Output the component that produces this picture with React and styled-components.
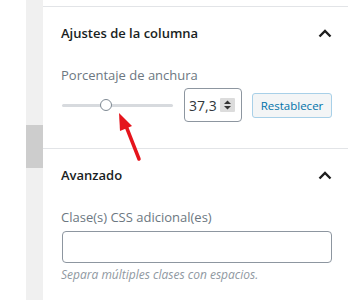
import styled, { createGlobalStyle } from "styled-components";

const GlobalStyle = createGlobalStyle`
    body {
        margin: 0;
        background: #fff;
        font-family: "Open Sans", "Noto Sans", sans-serif;
    }
`

function Chevron() {
    return (
        <svg width="14" height="9" viewBox="0 0 14 9">
            <polyline points="1.5,7.5 7,2 12.5,7.5" fill="none" stroke="#1e1e1e" strokeWidth="2.4" />
        </svg>
    )
}

function Spinner() {
    return (
        <Spin>
            <svg width="15" height="14" viewBox="0 0 15 14">
                <polygon points="7.5,2.5 11,6 4,6" fill="#333" />
                <polygon points="4,8 11,8 7.5,11.5" fill="#333" />
            </svg>
        </Spin>
    )
}

export default function App() {
    return (
        <Page>
            <GlobalStyle />
            <Gutter />
            <Track>
                <Thumb />
            </Track>
            <Panel>
                <Section>
                    <Header>
                        <Title>Ajustes de la columna</Title>
                        <Chevron />
                    </Header>
                    <Label>Porcentaje de anchura</Label>
                    <Controls>
                        <Slider>
                            <Knob $left={44} />
                        </Slider>
                        <NumberBox>
                            <Value>37,3</Value>
                            <Spinner />
                        </NumberBox>
                        <Reset>Restablecer</Reset>
                    </Controls>
                </Section>
                <Section>
                    <Header>
                        <Title>Avanzado</Title>
                        <Chevron />
                    </Header>
                    <Label>Clase(s) CSS adicional(es)</Label>
                    <TextInput />
                    <Help>Separa múltiples clases con espacios.</Help>
                </Section>
            </Panel>
            <Arrow width="32" height="50" viewBox="0 0 32 50">
                <line x1="24" y1="47" x2="11" y2="14" stroke="#e5141c" strokeWidth="3.5" strokeLinecap="round" />
                <polygon points="4,1 17,14 5,19" fill="#e5141c" />
            </Arrow>
        </Page>
    )
}

const Page = styled.div`
    position: relative;
    display: flex;
    width: 361px;
    height: 300px;
    overflow: hidden;
`

const Gutter = styled.div`
    width: 26px;
    flex-shrink: 0;
`

const Track = styled.div`
    width: 17px;
    flex-shrink: 0;
    background: #f0f0f0;
    padding-top: 125px;
    box-sizing: border-box;
`

const Thumb = styled.div`
    height: 43px;
    background: #cdcdcd;
`

const Panel = styled.div`
    width: 305px;
    padding-top: 6px;
`

const Section = styled.div`
    border-top: 1px solid #e2e4e7;
    padding: 16px 16px 26px 18px;
    display: flex;
    flex-direction: column;
`

const Header = styled.div`
    display: flex;
    justify-content: space-between;
    align-items: center;
    height: 20px;
`

const Title = styled.h2`
    margin: 0;
    font-size: 13px;
    font-weight: 600;
    color: #191e23;
`

const Label = styled.div`
    margin-top: 23px;
    font-size: 13px;
    line-height: 18px;
    color: #6c7781;
`

const Controls = styled.div`
    display: flex;
    align-items: center;
    margin-top: 4px;
`

const Slider = styled.div`
    position: relative;
    width: 111px;
    height: 3px;
    background: #d7dade;
    border-radius: 2px;
    margin: 0 11px 0 1px;
`

const Knob = styled.div`
    position: absolute;
    top: -5px;
    left: ${(p) => p.$left - 6}px;
    width: 10px;
    height: 10px;
    border-radius: 50%;
    border: 1.5px solid #7e8993;
    background: #fff;
`

const NumberBox = styled.div`
    box-sizing: border-box;
    width: 58px;
    height: 34px;
    border: 1px solid #8d96a0;
    border-radius: 4px;
    display: flex;
    align-items: center;
    padding-left: 4px;
    gap: 3px;
`

const Value = styled.span`
    font-size: 14px;
    color: #32373c;
`

const Spin = styled.span`
    display: flex;
    background: #dcdcdc;
    border-radius: 1px;
`

const Reset = styled.button`
    margin-left: 10px;
    box-sizing: border-box;
    width: 80px;
    height: 25px;
    padding: 0;
    border: 1px solid #a8d0e8;
    border-radius: 3px;
    background: #f3f5f6;
    color: #0073aa;
    font-family: "Open Sans", "Noto Sans", sans-serif;
    font-size: 11.5px;
`

const TextInput = styled.input`
    box-sizing: border-box;
    margin-top: 5px;
    width: 270px;
    height: 32px;
    border: 1px solid #8d96a0;
    border-radius: 4px;
    margin-left: 1px;
`

const Help = styled.div`
    margin-top: 5px;
    font-size: 12px;
    line-height: 14px;
    font-style: italic;
    color: #8f98a1;
`

const Arrow = styled.svg`
    position: absolute;
    left: 115px;
    top: 112px;
`
